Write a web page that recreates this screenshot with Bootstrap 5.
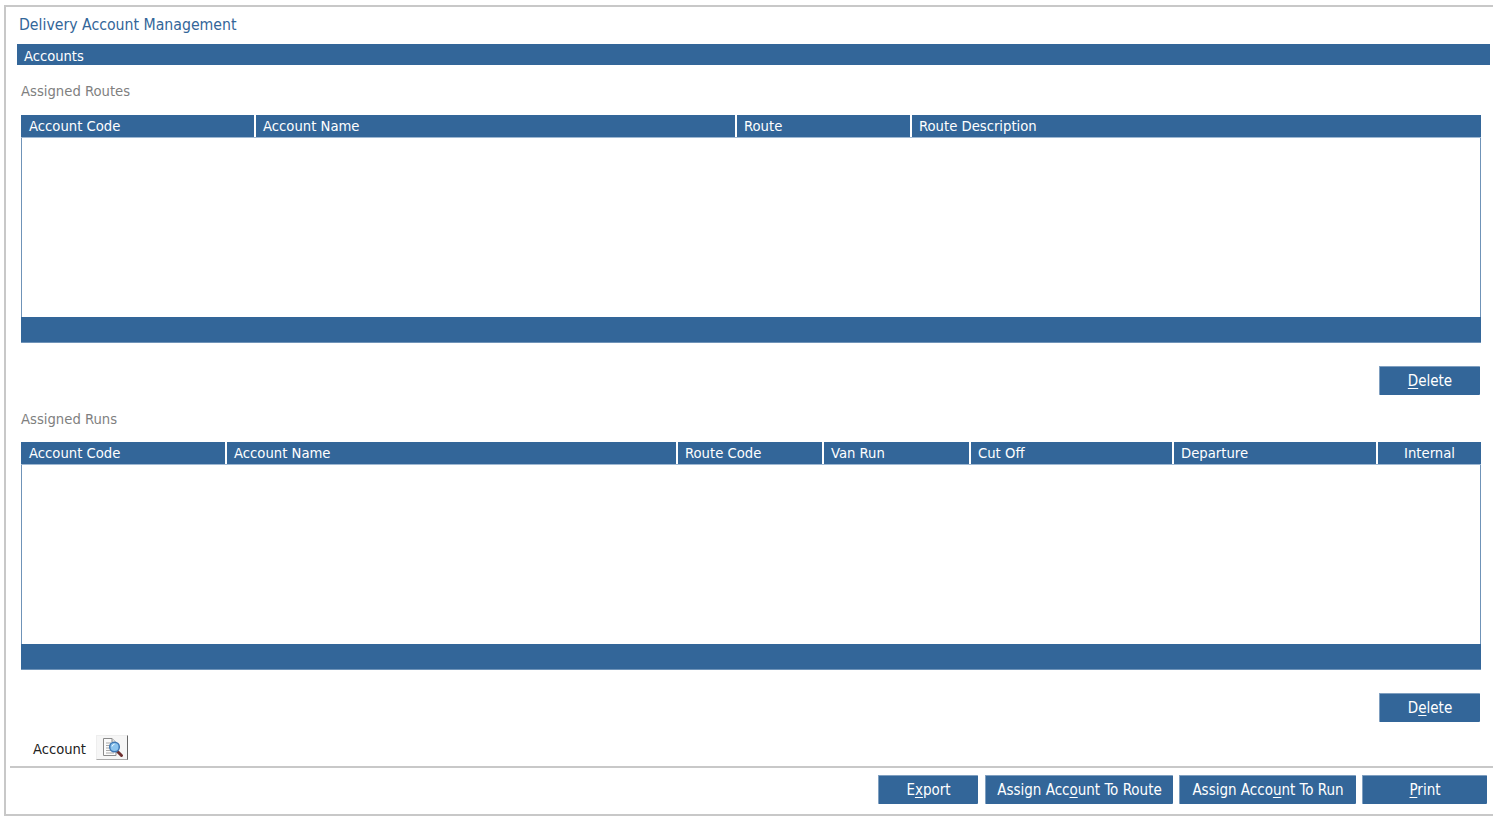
<!DOCTYPE html>
<html lang="en"><head><meta charset="utf-8"><title>Delivery Account Management</title>
<link href="https://cdn.jsdelivr.net/npm/bootstrap@5.3.0/dist/css/bootstrap.min.css" rel="stylesheet">
<style>
html,body{height:819px;overflow:hidden;background:#fff}
body{font-family:"DejaVu Sans","Liberation Sans",sans-serif;font-stretch:condensed;font-size:14px;color:#333;padding:5px 0 3px 4px}
.frame{height:811px;border:solid #c8c8c8;border-width:2px 0 2px 2px;padding-top:7px;display:flex;flex-direction:column}
.page-title{color:#336699;font-size:15.7px;line-height:22px;padding-left:13px;margin:0;font-weight:400}
.bar{background:#336699;color:#fff;height:21px;line-height:23px;margin:8px 3px 0 11px;padding-left:7px;font-size:14.6px}
.sect-label{color:#7f7f7f;font-size:14.7px;line-height:20px;margin:0 0 0 15px}
.sect-a{margin-top:16px}
.sect-b{margin-top:14px}
.grid-wrap{margin:13px 12px 0 15px;border:solid #6f93b8;border-width:0 1px 1px 1px;height:228px;display:flex;flex-direction:column}
.sect-a + .grid-wrap{margin-top:14px}
.grid-head{display:flex;height:23px;background:#336699;color:#fff;font-size:14.7px;line-height:21px;margin:0 -1px;border-bottom:1px solid #9fb8d2}
.grid-head>div{padding-left:7px;border-left:2px solid #fff;white-space:nowrap;overflow:hidden}
.grid-head>div:first-child{border-left:0;padding-left:8px}
.grid-fill{flex:1}
.grid-foot{height:25px;background:#336699;margin:0 -1px}
.r1{width:233px}.r2{width:481px}.r3{width:175px}.r4{flex:1}
.u1{width:204px}.u2{width:451px}.u3{width:146px}.u4{width:147px}.u5{width:203px}.u6{width:204px}
.u7{flex:1;text-align:center;padding-left:0!important}
.act{background:#336699;color:#fff;border:1px solid #7f9fc0;border-width:1px 0 0 1px;border-radius:1px;height:29px;font-size:15px;line-height:26px;padding:0;text-align:center;font-family:inherit;font-stretch:condensed}
.act u{text-underline-offset:2px}
.act:hover{background:#2b5a8a;color:#fff}
.del-row{margin:23px 13px 0 0}
.del-btn{width:101px}
.acct-row{margin:13px 0 0 27px;height:25px;font-size:14.6px;color:#222}
.acct-text{position:relative;top:1px}
.lookup{width:32px;height:25px;margin-left:10px;padding:0;background:#f6f6f6;border:1px solid;border-color:#eee #666 #aaa #eee;display:flex;align-items:center;justify-content:center}
.rule{border-top:2px solid #c8c8c8;margin:6px 0 0 4px}
.foot-btns{margin:7px 6px 0 0;gap:6px}
.b1{width:100px;margin-right:1px}.b2{width:188px}.b3{width:177px}.b4{width:125px}
</style></head>
<body>
<div class="frame">
  <h1 class="page-title">Delivery Account Management</h1>
  <div class="bar">Accounts</div>
  <p class="sect-label sect-a">Assigned Routes</p>
  <div class="grid-wrap">
    <div class="grid-head"><div class="r1">Account Code</div><div class="r2">Account Name</div><div class="r3">Route</div><div class="r4">Route Description</div></div>
    <div class="grid-fill"></div><div class="grid-foot"></div>
  </div>
  <div class="del-row d-flex justify-content-end"><button class="btn act del-btn"><u>D</u>elete</button></div>
  <p class="sect-label sect-b">Assigned Runs</p>
  <div class="grid-wrap">
    <div class="grid-head"><div class="u1">Account Code</div><div class="u2">Account Name</div><div class="u3">Route Code</div><div class="u4">Van Run</div><div class="u5">Cut Off</div><div class="u6">Departure</div><div class="u7">Internal</div></div>
    <div class="grid-fill"></div><div class="grid-foot"></div>
  </div>
  <div class="del-row d-flex justify-content-end"><button class="btn act del-btn">D<u>e</u>lete</button></div>
  <div class="acct-row d-flex align-items-center"><span class="acct-text">Account</span>
    <button class="lookup" aria-label="Find account"><svg width="26" height="21" viewBox="0 0 26 21"><path d="M4.500 1.500H13l4 4V18.500H4.500Z" fill="#fbfbfb" stroke="#8a8a8a"/><path d="M13 1.500V5.500H17" fill="#e2e2e2" stroke="#8a8a8a"/><path d="M7 6h5M7 8.500h4M7 11h4M7 13.500h5M7 16h8" stroke="#a8a8a8"/><path d="M18.500 14.500l4 4" stroke="#6e3030" stroke-width="3" stroke-linecap="round"/><circle cx="15.500" cy="10" r="4.800" fill="#8cc4ee" stroke="#3f78b4" stroke-width="1.500"/><path d="M13 9.500a3 3 0 0 1 2.500-2.300" stroke="#eef8ff" fill="none"/></svg></button>
  </div>
  <div class="rule"></div>
  <div class="foot-btns d-flex justify-content-end">
    <button class="btn act b1">E<u>x</u>port</button>
    <button class="btn act b2">Assign Acc<u>o</u>unt To Route</button>
    <button class="btn act b3">Assign Acco<u>u</u>nt To Run</button>
    <button class="btn act b4"><u>P</u>rint</button>
  </div>
</div>
<script src="https://cdn.jsdelivr.net/npm/bootstrap@5.3.0/dist/js/bootstrap.bundle.min.js"></script>
</body></html>
